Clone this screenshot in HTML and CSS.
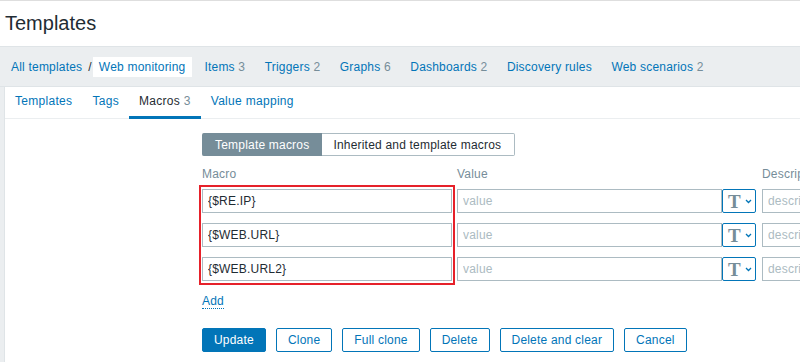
FILE: index.html
```html
<!DOCTYPE html>
<html lang="en">
<head>
  <meta charset="UTF-8" />
  <title>Templates - Macros</title>
  <link rel="stylesheet" href="styles.css">
</head>
<body>
  <header class="page-title">
    <h1>Templates</h1>
  </header>

  <nav class="obj-nav">
    <a href="#">All templates</a>
    <span class="sep">/</span>
    <span class="crumb">Web monitoring</span>
    <a class="nav-item" href="#">Items <span class="count">3</span></a>
    <a class="nav-item" href="#">Triggers <span class="count">2</span></a>
    <a class="nav-item" href="#">Graphs <span class="count">6</span></a>
    <a class="nav-item" href="#">Dashboards <span class="count">2</span></a>
    <a class="nav-item" href="#">Discovery rules</a>
    <a class="nav-item" href="#">Web scenarios <span class="count">2</span></a>
  </nav>

  <div class="panel">
    <div class="tabs">
      <a class="tab" href="#">Templates</a>
      <a class="tab" href="#">Tags</a>
      <a class="tab active" href="#">Macros <span class="count">3</span></a>
      <a class="tab" href="#">Value mapping</a>
    </div>

    <div class="form">
      <div class="segmented">
        <span class="seg selected">Template macros</span>
        <span class="seg">Inherited and template macros</span>
      </div>

      <div class="macros">
        <div class="cols">
          <span class="col-macro">Macro</span>
          <span class="col-value">Value</span>
          <span class="col-desc">Description</span>
        </div>

        <div class="row">
          <input class="in macro" type="text" value="{$RE.IP}">
          <input class="in value" type="text" placeholder="value">
          <button class="type-btn"><span class="t">T</span><svg width="7" height="5" viewBox="0 0 7 5"><path d="M1 1l2.5 2.5L6 1" fill="none" stroke="#0275b8" stroke-width="1.3"/></svg></button>
          <input class="in desc" type="text" placeholder="description">
        </div>
        <div class="row">
          <input class="in macro" type="text" value="{$WEB.URL}">
          <input class="in value" type="text" placeholder="value">
          <button class="type-btn"><span class="t">T</span><svg width="7" height="5" viewBox="0 0 7 5"><path d="M1 1l2.5 2.5L6 1" fill="none" stroke="#0275b8" stroke-width="1.3"/></svg></button>
          <input class="in desc" type="text" placeholder="description">
        </div>
        <div class="row">
          <input class="in macro" type="text" value="{$WEB.URL2}">
          <input class="in value" type="text" placeholder="value">
          <button class="type-btn"><span class="t">T</span><svg width="7" height="5" viewBox="0 0 7 5"><path d="M1 1l2.5 2.5L6 1" fill="none" stroke="#0275b8" stroke-width="1.3"/></svg></button>
          <input class="in desc" type="text" placeholder="description">
        </div>

        <div class="highlight"></div>
      </div>

      <div class="add-row"><a class="add" href="#">Add</a></div>

      <div class="buttons">
        <button class="btn primary">Update</button>
        <button class="btn">Clone</button>
        <button class="btn">Full clone</button>
        <button class="btn">Delete</button>
        <button class="btn">Delete and clear</button>
        <button class="btn">Cancel</button>
      </div>
    </div>
  </div>
</body>
</html>
```

FILE: styles.css
```css
body {
  margin: 0;
  background: #ebeef0;
  font-family: "Liberation Sans", Arial, sans-serif;
  font-size: 12px;
  letter-spacing: 0.2px;
  color: #1f2c33;
  overflow: hidden;
  height: 362px;
}
a {
  color: #0275b8;
  text-decoration: none;
}
.count {
  color: #768d99;
}

.page-title {
  background: #fff;
  border-top: 1px solid #dedede;
  border-bottom: 1px solid #dfe4e7;
  height: 45px;
  padding-left: 5px;
  display: flex;
  align-items: center;
}
.page-title h1 {
  margin: 0;
  font-size: 20px;
  font-weight: normal;
  letter-spacing: 0;
  color: #1f2c33;
}

.obj-nav {
  height: 39px;
  border-bottom: 1px solid #dfe4e7;
  display: flex;
  align-items: center;
  padding-left: 11px;
  white-space: nowrap;
}
.obj-nav .sep {
  margin: 0 1px 0 6px;
  color: #1f2c33;
}
.obj-nav .crumb {
  background: #fff;
  color: #0275b8;
  height: 20px;
  line-height: 20px;
  padding: 0 7px 0 6px;
  margin-right: 12px;
}
.obj-nav .nav-item {
  margin-right: 19.5px;
}

.panel {
  background: #fff;
  margin-left: 4px;
  border-left: 1px solid #dfe4e7;
  height: 300px;
}

.tabs {
  display: flex;
  border-bottom: 1px solid #ebeef0;
}
.tab {
  padding: 0 10px;
  line-height: 29px;
  letter-spacing: 0.3px;
  border-bottom: 3px solid transparent;
  margin-bottom: -1px;
}
.tab.active {
  color: #1f2c33;
  border-bottom-color: #0275b8;
}

.form {
  padding: 14px 0 0 197px;
}

.segmented {
  display: inline-flex;
  height: 23px;
}
.seg {
  display: flex;
  align-items: center;
  padding: 0 13px 0 11px;
  border: 1px solid #acbbc2;
  border-left: none;
  border-radius: 0 2px 2px 0;
  color: #1f2c33;
}
.seg.selected {
  background: #768d99;
  border-color: #768d99;
  color: #fff;
  border-radius: 2px 0 0 2px;
  padding: 0 12px 0 13px;
}

.macros {
  position: relative;
  width: 800px;
}
.cols {
  display: flex;
  height: 14px;
  line-height: 14px;
  margin: 11px 0 8px;
  color: #768d99;
}
.col-macro {
  width: 255px;
}
.col-value {
  width: 305px;
}

.row {
  display: flex;
  height: 24px;
  margin-bottom: 10px;
}
.in {
  box-sizing: border-box;
  height: 24px;
  border: 1px solid #acbbc2;
  padding: 0 5px;
  font-family: inherit;
  font-size: 12px;
  letter-spacing: 0.2px;
  color: #1f2c33;
  background: #fff;
  outline: none;
}
.in::placeholder {
  color: #acbbc2;
}
.in.macro {
  width: 250px;
  margin-right: 5px;
}
.in.value {
  width: 265px;
}
.in.desc {
  width: 200px;
  margin-left: 6px;
}
.type-btn {
  box-sizing: border-box;
  width: 34px;
  height: 24px;
  border: 1px solid #0275b8;
  border-radius: 2px;
  background: #fff;
  padding: 0 0 0 5px;
  display: flex;
  align-items: center;
  gap: 4px;
}
.type-btn .t {
  font-family: "Liberation Serif", "Times New Roman", serif;
  font-size: 19px;
  font-weight: bold;
  color: #768d99;
  line-height: 1;
}

.highlight {
  position: absolute;
  left: -3px;
  top: 18px;
  width: 252px;
  height: 96px;
  border: 2px solid #e6212a;
}

.add-row {
  margin-top: 13px;
  height: 14px;
  line-height: 14px;
}
.add {
  border-bottom: 1px dotted #0275b8;
}

.buttons {
  display: flex;
  gap: 10px;
  margin-top: 20px;
}
.btn {
  box-sizing: border-box;
  height: 24px;
  padding: 0 11px;
  border: 1px solid #0275b8;
  border-radius: 2px;
  background: #fff;
  color: #0275b8;
  font-family: inherit;
  font-size: 12px;
  letter-spacing: 0.2px;
}
.btn.primary {
  background: #0275b8;
  color: #fff;
}
```
